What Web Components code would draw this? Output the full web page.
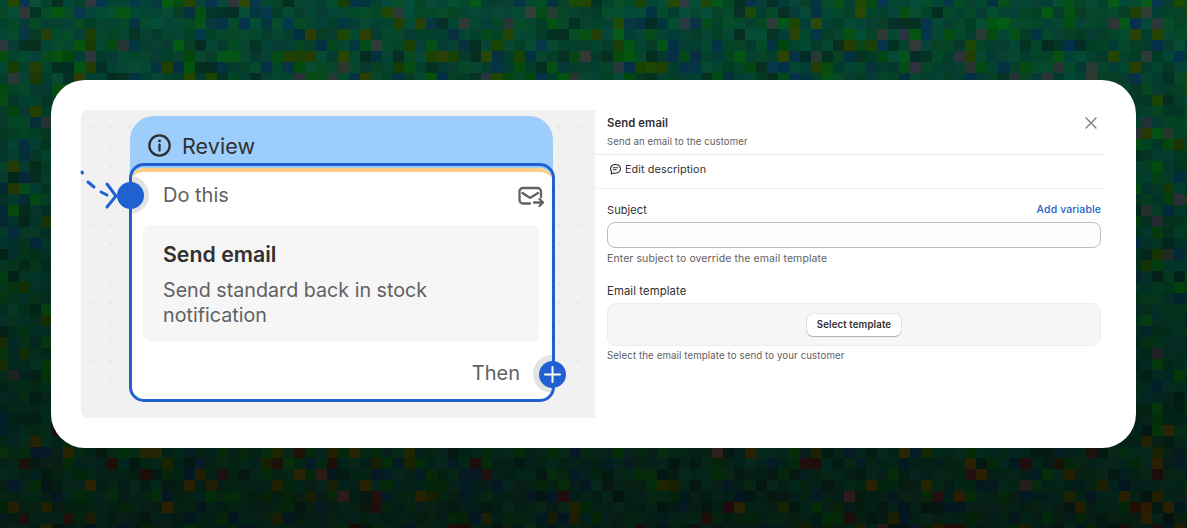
<!DOCTYPE html>
<html><head><meta charset="utf-8"><style>
html,body{margin:0;height:100%}
body{width:1187px;height:528px;overflow:hidden;font-family:Inter,"Liberation Sans",sans-serif;background:#0b3d26}
</style></head><body>
<mosaic-stage>
 <promo-card>
  <flow-diagram slot="left"></flow-diagram>
  <settings-panel slot="right"></settings-panel>
 </promo-card>
</mosaic-stage>
<script>
class MosaicStage extends HTMLElement{
 constructor(){super();this.attachShadow({mode:'open'}).innerHTML=`<style>
 :host{display:flex;position:relative;width:1187px;height:528px;padding:80px 51px;box-sizing:border-box}
 canvas{position:absolute;inset:0}
 ::slotted(*){position:relative}
 </style><canvas width="1187" height="528"></canvas><slot></slot>`;
 const c=this.shadowRoot.querySelector('canvas').getContext('2d');
 let s=12345;const r=()=>(s=(s*1664525+1013904223)>>>0)/4294967296;
 const C=11;
 for(let y=-4;y<528;y+=C)for(let x=-3;x<1187;x+=C){
  const t=Math.max(0,y)/528, l=1.08-t*.62, k=r();
  let R=2+r()*6, G=56+r()*18, B=34+r()*20;
  if(k>.95){R=36+r()*14;G=50+r()*8;B=48+r()*14}
  else if(k>.88){R=22+r()*22;G=58+r()*12;B=2+r()*6}
  else if(k>.78){R=2+r()*5;G=68+r()*20;B=12+r()*14}
  else if(k>.7){R=2+r()*6;G=46+r()*8;B=58+r()*16}
  else if(k>.62){G=42+r()*10;B=30+r()*8}
  if(t>.8&&k>.96){R=26+r()*10;G=22+r()*14;B=10+r()*24}
  c.fillStyle=`rgb(${R*(t>.8?1:l)|0},${G*l|0},${B*l|0})`;c.fillRect(x,y,C,C);
 }}
}
class PromoCard extends HTMLElement{
 constructor(){super();this.attachShadow({mode:'open'}).innerHTML=`<style>
 :host{display:flex;width:1085px;height:368px;box-sizing:border-box;padding:30px;background:#fff;border-radius:34px}
 </style><slot name="left"></slot><slot name="right"></slot>`}
}
class FlowDiagram extends HTMLElement{
 constructor(){super();this.attachShadow({mode:'open'}).innerHTML=`<style>
 :host{display:block;position:relative;width:514px;height:308px;flex:none;box-sizing:border-box;padding:6px 0 0 49px;border-radius:8px 0 0 8px;
  background-color:#f1f1f1;background-image:radial-gradient(circle at center,#e2e2e2 0,#e2e2e2 1px,transparent 1.4px);background-size:19.5px 19.5px;background-position:0 7.5px}
 .review{width:423px;height:110px;background:#9ccdfb;border-radius:24px 24px 0 0;box-sizing:border-box;padding:16px 0 0 18px;display:flex;align-items:flex-start;gap:11px;font-size:21.5px;line-height:28px;color:#303030;letter-spacing:.1px}
 .review svg{width:23px;height:23px;margin-top:2px;flex:none}
 .body{position:relative;overflow:hidden;margin:-58px 0 0 0;width:423px;height:231px;background:#fff;border-radius:14px 14px 12px 12px;box-sizing:border-box;display:flex;flex-direction:column;padding:0 14px 0 13px}
 .strip{position:absolute;left:0;right:0;top:0;height:16px;border-radius:14px 14px 0 0;border-top:4px solid #fbcd87;box-sizing:border-box}
 .head{position:relative;display:flex;justify-content:space-between;align-items:center;height:54px;padding:0 0 0 20px;font-size:20px;color:#616161}
 .head svg{width:26px;height:26px;margin:4px -5px 0 0}
 .inner{position:relative;background:#f6f6f6;border-radius:8px;height:117px;flex:none;box-sizing:border-box;padding:15px 20px 0 20px;margin-top:3px}
 .inner b{display:block;font-size:21.3px;line-height:28px;font-weight:600;color:#303030}
 .inner p{margin:10px 0 0;font-size:19.7px;line-height:25px;color:#616161;width:340px}
 .foot{position:relative;display:flex;justify-content:flex-end;font-size:20px;line-height:24px;color:#616161;padding:19px 19px 0 0}
 .frame{position:absolute;left:48px;top:53px;width:426px;height:239px;box-sizing:border-box;border:3px solid #2160d0;border-radius:15px;pointer-events:none;display:block}
 .halo,.dot{position:absolute;border-radius:50%}
 .halo{background:#e3e3e3;width:38px;height:38px}
 .dot{background:#2160d0;width:27px;height:27px}
 svg.edge{position:absolute;left:0;top:55px;width:60px;height:50px;overflow:visible}
 svg.plus{position:absolute;left:458px;top:251px;width:27px;height:27px}
 </style>
 <div class="review"><svg viewBox="0 0 24 24" fill="none" stroke="#303030" stroke-width="2.4"><circle cx="12" cy="12" r="10.6"/><path d="M12 11v6.300" stroke-linecap="round"/><circle cx="12" cy="7.200" r="1.500" fill="#303030" stroke="none"/></svg><span>Review</span></div>
 <div class="body"><div class="strip"></div>
  <span class="halo" style="left:-19px;top:8px"></span>
  <span class="halo" style="left:403px;top:187px"></span>
  <div class="head"><span>Do this</span><svg viewBox="0 0 26 26" fill="none" stroke="#616161" stroke-width="2.300" stroke-linecap="round" stroke-linejoin="round"><path d="M12 19.500H5A3.500 3.500 0 0 1 1.500 16V7.500A3.500 3.500 0 0 1 5 4h14.500A3.500 3.500 0 0 1 23 7.500V13"/><path d="M4.500 9l6.500 4.200a2 2 0 0 0 2.200 0L20 9"/><path d="M16 18.500h9M21.500 15l3.500 3.500-3.500 3.500"/></svg></div>
  <div class="inner"><b>Send email</b><p>Send standard back in stock notification</p></div>
  <div class="foot"><span>Then</span></div>
 </div>
 <span class="frame"></span>
 <svg class="edge" viewBox="0 0 60 50" fill="none" stroke="#2160d0" stroke-width="3" stroke-linecap="round"><path d="M1 7L1.500 8M7 17L13 22M20 27L26 30M26 19L35 31L26 42"/></svg>
 <span class="dot" style="left:36px;top:72px"></span>
 <span class="dot" style="left:458px;top:251px"></span>
 <svg class="plus" viewBox="0 0 27 27" stroke="#fff" stroke-width="2" stroke-linecap="round"><path d="M13.500 6v15M6 13.500h15"/></svg>`}
}
class SettingsPanel extends HTMLElement{
 constructor(){super();this.attachShadow({mode:'open'}).innerHTML=`<style>
 :host{display:flex;flex-direction:column;width:511px;font-size:10.5px;color:#303030;letter-spacing:.1px}
 header{position:relative;padding:6px 12px 0;height:45px;box-sizing:border-box;border-bottom:1px solid #ebebeb}
 header b{display:block;font-size:11.3px;line-height:14px;font-weight:600}
 header span{display:block;font-size:9.6px;line-height:12px;margin-top:6px;color:#616161}
 header svg{position:absolute;right:9px;top:7px;width:12px;height:12px}
 .edit{height:34px;display:flex;align-items:center;gap:3px;padding:0 0 4px 15px;border-bottom:1px solid #f1f1f1;font-size:10.8px;box-sizing:border-box}
 .edit svg{width:13px;height:13px;margin-left:-1px}
 .field{padding:0 5px 0 12px}
 .lab{display:flex;justify-content:space-between;font-size:11px;line-height:14px}
 .lab a{color:#2160d0;font-weight:500;font-size:10.5px}
 .input{height:26px;margin-top:5px;border:1px solid #bdbdbd;border-radius:8px;background:#fdfdfd;box-sizing:border-box}
 .hint{font-size:10.5px;line-height:12px;color:#616161;margin-top:5px}
 .tmpl{height:43px;margin-top:5px;border:1px solid #ededed;border-radius:9px;background:#f6f6f6;box-sizing:border-box;display:flex;align-items:center;justify-content:center}
 .btn{font:600 9.7px/1 Inter,sans-serif;color:#303030;background:#fff;border-radius:6px;height:22px;width:94px;display:flex;align-items:center;justify-content:center;box-shadow:0 1px 1px rgba(0,0,0,.25),0 0 0 .5px rgba(0,0,0,.12)}
 </style>
 <header><b>Send email</b><span>Send an email to the customer</span>
 <svg viewBox="0 0 12 12" stroke="#777" stroke-width="1.300" stroke-linecap="round"><path d="M1 1l10 10M11 1L1 11"/></svg></header>
 <div class="edit"><svg viewBox="0 0 13 13" fill="none" stroke="#303030" stroke-width="1.100" stroke-linecap="round" stroke-linejoin="round"><path d="M6.500 1.500c-3 0-5 1.800-5 4.300 0 1.100.4 2 1.100 2.800L2.200 11l2.600-1c.5.100 1.100.2 1.700.2 3 0 5-1.900 5-4.400s-2-4.300-5-4.300z"/><path d="M4.200 4.800h4.600M4.200 6.800h3"/></svg><span>Edit description</span></div>
 <div class="field" style="margin-top:14px"><div class="lab"><span>Subject</span><a>Add variable</a></div><div class="input"></div><div class="hint">Enter subject to override the email template</div></div>
 <div class="field" style="margin-top:19px"><div class="lab" style="font-size:11.300px"><span>Email template</span></div><div class="tmpl"><span class="btn">Select template</span></div><div class="hint" style="margin-top:4px;font-size:9.7px">Select the email template to send to your customer</div></div>`}
}
customElements.define('mosaic-stage',MosaicStage);
customElements.define('promo-card',PromoCard);
customElements.define('flow-diagram',FlowDiagram);
customElements.define('settings-panel',SettingsPanel);
</script></body></html>
